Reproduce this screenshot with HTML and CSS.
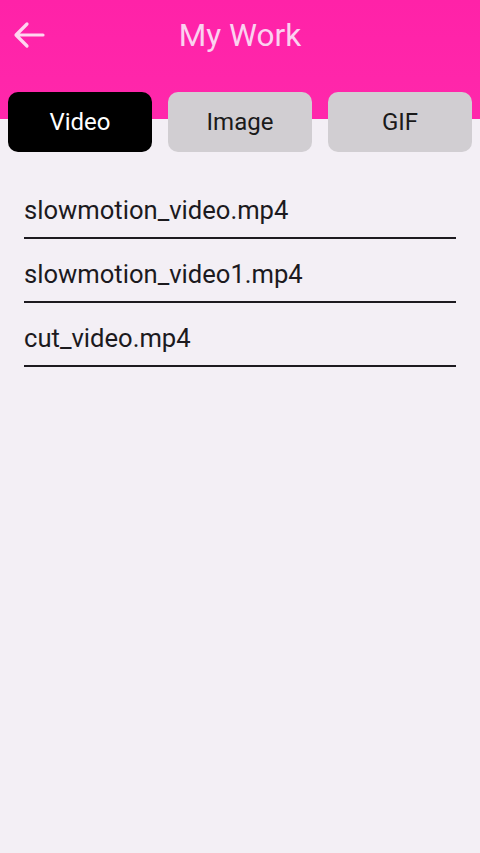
FILE: index.html
```html
<!DOCTYPE html>
<html>
<head>
<meta charset="utf-8">
<link rel="stylesheet" href="styles.css">
</head>
<body>
<div class="top">
  <div class="appbar">
    <svg class="back" width="34" height="28" viewBox="0 0 34 28">
      <path d="M31 14H5M15 3L4 14l11 11" fill="none" stroke="#ffd6f0" stroke-width="3.2" stroke-linecap="round" stroke-linejoin="round"/>
    </svg>
    <div class="title">My Work</div>
  </div>
  <div class="tabs">
    <div class="tab active">Video</div>
    <div class="tab">Image</div>
    <div class="tab">GIF</div>
  </div>
</div>
<div class="list">
  <div class="item">slowmotion_video.mp4</div>
  <div class="item">slowmotion_video1.mp4</div>
  <div class="item">cut_video.mp4</div>
</div>
</body>
</html>
```
FILE: styles.css
```css
html, body {
  margin: 0;
  padding: 0;
}
body {
  width: 480px;
  height: 853px;
  background: #f3eff5;
  font-family: Roboto, "Noto Sans", sans-serif;
  overflow: hidden;
}
.top {
  background: linear-gradient(to bottom, #ff22a8 0, #ff28ab 119px, #f3eff5 119px);
}
.appbar {
  height: 72px;
  display: flex;
  align-items: center;
  justify-content: center;
  position: relative;
}
.back {
  position: absolute;
  left: 12px;
  top: 21px;
}
.title {
  color: #fbd2f0;
  font-size: 31.5px;
  line-height: 1;
}
.tabs {
  display: flex;
  gap: 16px;
  padding: 20px 8px 0 8px;
}
.tab {
  flex: 1;
  height: 60px;
  border-radius: 10px;
  background: #d1ced2;
  color: #1a1a1a;
  font-size: 24px;
  display: flex;
  align-items: center;
  justify-content: center;
}
.tab.active {
  background: #000;
  color: #fff;
}
.list {
  padding: 23px 24px 0 24px;
}
.item {
  box-sizing: border-box;
  height: 64px;
  border-bottom: 2px solid #1d1a1f;
  font-size: 25.6px;
  color: #1c1a1e;
  line-height: 1;
  display: flex;
  align-items: flex-end;
  padding-bottom: 13px;
}
```
